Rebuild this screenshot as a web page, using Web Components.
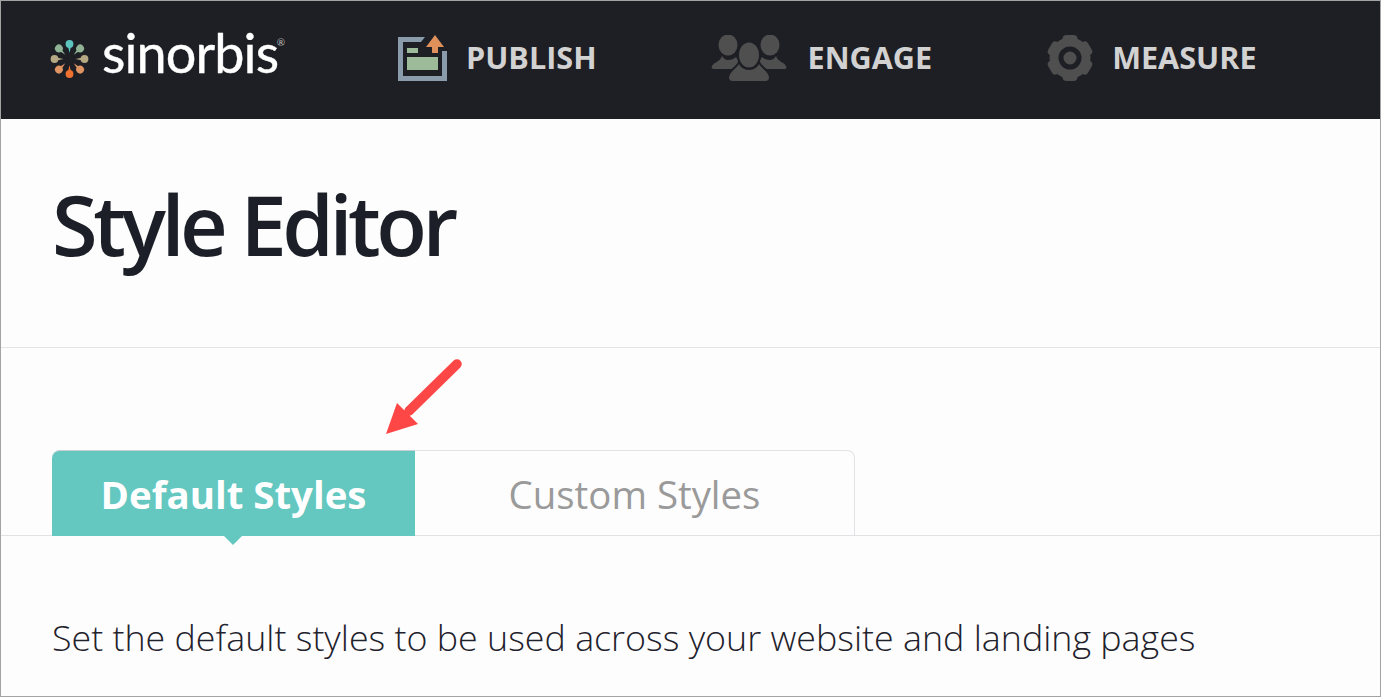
<!DOCTYPE html>
<html>
<head>
<meta charset="utf-8">
<title>Style Editor</title>
<style>
  html, body { margin: 0; padding: 0; background: #fdfdfd; }
  body { font-family: "Open Sans", sans-serif; }
</style>
</head>
<body>
<app-frame>
  <top-bar>
    <brand-logo></brand-logo>
    <nav-item label="PUBLISH" icon="publish" style="--gap:19px;--left:113px"></nav-item>
    <nav-item label="ENGAGE" icon="engage" style="--gap:21px;--left:114px"></nav-item>
    <nav-item label="MEASURE" icon="measure" style="--gap:19px;--left:115px"></nav-item>
  </top-bar>
  <page-title>Style Editor</page-title>
  <tab-strip>
    <tab-button active style="--w:363px">Default Styles</tab-button>
    <tab-button style="--w:440px">Custom Styles</tab-button>
  </tab-strip>
  <intro-text>Set the default styles to be used across your website and landing pages</intro-text>
</app-frame>

<script>
const gearTeeth = [0, 60, 120, 180, 240, 300]
  .map(a => `<rect x="15.500" y="0" width="15" height="12" rx="4" transform="rotate(${a} 23 23)"/>`).join("");

const icons = {
  publish: `<svg width="49" height="46" viewBox="0 0 49 46">
    <path d="M0 2H27L23 7H5V41H44V16H49V46H0Z" fill="#8a9bab"/>
    <rect x="9" y="13" width="11" height="5" fill="#9dbb98"/>
    <rect x="9" y="22" width="31" height="13" fill="#9dbb98"/>
    <path d="M37 0L46 12H40V18H34V12H28Z" fill="#e0905a"/>
  </svg>`,
  engage: `<svg width="76" height="46" viewBox="0 0 76 46" fill="#4f4f4f">
    <ellipse cx="17" cy="10" rx="9.500" ry="10.500"/>
    <ellipse cx="59" cy="10" rx="9.500" ry="10.500"/>
    <path d="M1 31C3 27 9 27 11 21C13 24 15 25 17 25C20 25 23 24 25 22L30 30L20 34H3C1 34 0 33 1 31Z"/>
    <path d="M75 31C73 27 67 27 65 21C63 24 61 25 59 25C56 25 53 24 51 22L46 30L56 34H73C75 34 76 33 75 31Z"/>
    <ellipse cx="38" cy="20" rx="11" ry="13.500" stroke="#1e1f25" stroke-width="2"/>
    <path d="M28 27C30 32 34 34 38 34C42 34 46 32 48 27C50 33 59 35 59 43C59 45 57 47 55 47H21C19 47 17 45 17 43C17 35 26 33 28 27Z" stroke="#1e1f25" stroke-width="2"/>
  </svg>`,
  measure: `<svg width="46" height="46" viewBox="0 0 46 46" fill="#4f4f4f" overflow="visible">
    <circle cx="23" cy="23" r="20.500"/>
    ${gearTeeth}
    <circle cx="23" cy="23" r="9" fill="none" stroke="#1e1f25" stroke-width="5"/>
  </svg>`
};

const logoPetals = [
  [0, "#5cc5c0"], [45, "#8fb394"], [90, "#b5a882"], [135, "#df9463"],
  [180, "#f07030"], [225, "#df9463"], [270, "#b5a882"], [315, "#8fb394"]
].map(([a, c]) => `<g fill="${c}" transform="rotate(${a} 19.500 19)">
    <circle cx="19.500" cy="4" r="3.900"/><path d="M18 6H21L19.500 13Z"/>
  </g>`).join("");

function define(name, css, html) {
  customElements.define(name, class extends HTMLElement {
    constructor() {
      super();
      this.attachShadow({ mode: "open" });
      this.shadowRoot.innerHTML = `<style>${css}</style>${typeof html === "function" ? html(this) : html}`;
    }
  });
}

define("app-frame", `
  :host { display: block; box-sizing: border-box; height: 697px; border: 1px solid #a3a3a3; overflow: hidden; background: #fdfdfd; }
`, `<slot></slot>`);

define("top-bar", `
  :host { display: flex; align-items: center; box-sizing: border-box; height: 118px; padding: 0 0 4px 49px; background: #1e1f25; }
`, `<slot></slot>`);

define("brand-logo", `
  :host { display: flex; align-items: center; gap: 13px; width: 235px; }
  svg { margin-top: 2px; }
  span { position: relative; margin-bottom: 11px; font: 400 54px/1 Lato, sans-serif; color: #fff; letter-spacing: -0.9px; -webkit-text-stroke: 0.4px #fff; }
  sup { position: absolute; top: 11px; right: -7px; font-size: 10px; line-height: 1; letter-spacing: 0; color: #bbb; -webkit-text-stroke: 0; }
`, `<svg width="39" height="39" viewBox="0 0 39 39">${logoPetals}</svg><span>sinorbis<sup>®</sup></span>`);

define("nav-item", `
  :host { display: flex; align-items: center; gap: var(--gap); margin-left: var(--left); color: #d2d2d2; font: 700 30.600px/1 "Open Sans", sans-serif; }
  svg { display: block; }
  span { margin-bottom: 2px; }
`, el => `${icons[el.getAttribute("icon")]}<span>${el.getAttribute("label")}</span>`);

define("page-title", `
  :host { display: block; height: 229px; box-sizing: border-box; padding: 59px 0 0 51px; border-bottom: 1px solid #e4e4e4; background: #fdfdfd;
    color: #1c1f28; font: 600 83px/92px "Open Sans", sans-serif; letter-spacing: -4.500px; }
`, `<slot></slot>`);

define("tab-strip", `
  :host { display: flex; margin-top: 102px; padding-left: 51px; height: 86px; box-sizing: border-box; border-bottom: 1px solid #e2e2e6; }
`, `<slot></slot>`);

define("tab-button", `
  :host { position: relative; display: flex; align-items: center; justify-content: center; box-sizing: border-box; width: var(--w); height: 86px; padding-top: 2px;
    border: 1px solid #e2e2e6; border-left: 0; border-radius: 0 8px 0 0; font: 400 38.400px/1 "Open Sans", sans-serif; color: #9a9a9a; background: #fdfdfd; }
  :host([active]) { background: #64c7c0; color: #fff; font-weight: 700; border: 0; border-top: 1px solid #c9cfcf; border-radius: 8px 0 0 0; }
  :host([active])::after { content: ""; position: absolute; left: 172px; top: 85px; border: 9px solid transparent; border-top: 9px solid #64c7c0; border-bottom: 0; }
`, `<slot></slot>`);

define("intro-text", `
  :host { display: block; margin-top: 79px; padding-left: 51px; color: #1f222c; font: 300 35.800px/44px "Open Sans", sans-serif; }
`, `<slot></slot>`);

define("arrow-mark", `
  :host { position: absolute; left: 385px; top: 357px; display: block; }
  svg { display: block; }
`, `<svg width="80" height="80" viewBox="0 0 80 80">
    <path d="M72 7L24 54" stroke="#fd4646" stroke-width="9.500" stroke-linecap="round"/>
    <path d="M1 77L12 46L33 67Z" fill="#fd4646"/>
  </svg>`);

document.body.appendChild(document.createElement("arrow-mark"));
</script>
</body>
</html>
